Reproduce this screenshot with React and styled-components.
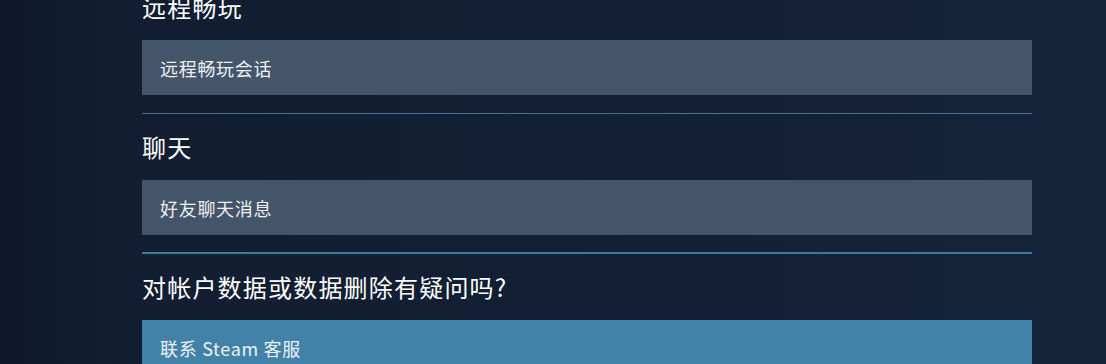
import React from "react";
import styled, { createGlobalStyle } from "styled-components";

const GlobalStyle = createGlobalStyle`
  html, body {
    margin: 0;
    padding: 0;
    height: 100%;
    overflow: hidden;
  }
  body {
    background: #131f33;
    font-family: "Noto Sans CJK SC", "Noto Sans", sans-serif;
  }
`;

const Page = styled.div`
  width: 1106px;
  height: 364px;
  overflow: hidden;
  background:
    linear-gradient(90deg, rgba(8, 16, 30, 0.35) 0%, rgba(8, 16, 30, 0) 12%),
    linear-gradient(90deg, #121d31 0%, #131f34 50%, #15233a 100%);
`;

const Content = styled.div`
  width: 890px;
  margin-left: 142px;
  margin-top: -9px;
`;

const Section = styled.section`
  display: flex;
  flex-direction: column;
`;

const Heading = styled.h2`
  margin: 0 0 17px;
  font-size: 24px;
  line-height: 32px;
  font-weight: 400;
  letter-spacing: 1.2px;
  color: #ffffff;
`;

const Row = styled.div`
  height: 55px;
  display: flex;
  align-items: center;
  padding: 0 18px;
  background: ${(p) => (p.$primary ? "#4382a8" : "#445469")};
  color: #eef1f4;
  font-size: 18px;
  letter-spacing: 0.7px;
`;

const Divider = styled.hr`
  margin: ${(p) => (p.$thick ? "17px" : "18px")} 0 17px;
  border: 0;
  height: ${(p) => (p.$thick ? "2px" : "1px")};
  background: ${(p) => (p.$thick ? "#3e7a9e" : "#46718f")};
`;

const sections = [
  { title: "远程畅玩", label: "远程畅玩会话" },
  { title: "聊天", label: "好友聊天消息" },
];

export default function App() {
  return (
    <>
      <GlobalStyle />
      <Page>
        <Content>
          {sections.map((s, i) => (
            <React.Fragment key={s.title}>
              <Section>
                <Heading>{s.title}</Heading>
                <Row>{s.label}</Row>
              </Section>
              <Divider $thick={i === sections.length - 1} />
            </React.Fragment>
          ))}
          <Section>
            <Heading>对帐户数据或数据删除有疑问吗?</Heading>
            <Row $primary>联系 Steam 客服</Row>
          </Section>
        </Content>
      </Page>
    </>
  );
}
